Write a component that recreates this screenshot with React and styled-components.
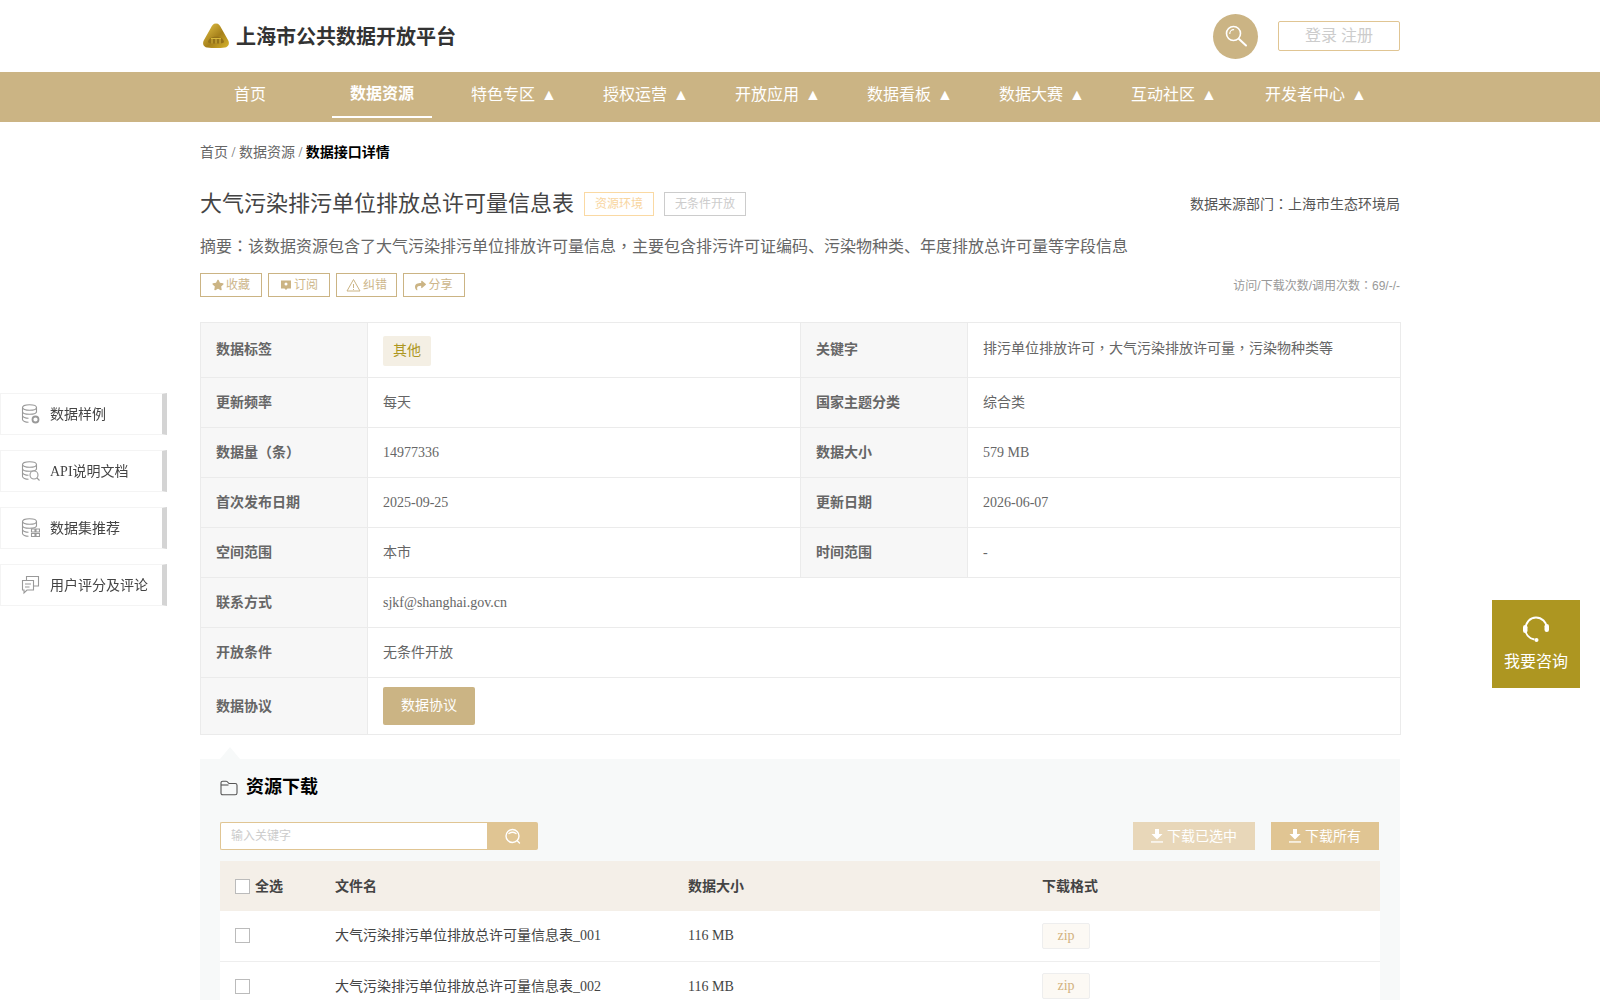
import React from 'react';
import styled, { createGlobalStyle } from 'styled-components';
import { FaStar, FaShare } from 'react-icons/fa';

const GlobalStyle = createGlobalStyle`
  html, body {
    margin: 0;
    padding: 0;
    background: #fff;
    overflow: hidden;
  }
  body {
    font-family: "Liberation Serif", "Noto Sans CJK SC", serif;
    font-size: 14px;
    line-height: 1.5;
    color: #666;
  }
  * { box-sizing: border-box; }
`;

const Page = styled.div`
  height: 1000px;
  overflow: hidden;
`;

const Wrap = styled.div`
  width: 1200px;
  margin: 0 auto;
`;

const HeaderBar = styled(Wrap)`
  height: 72px;
  display: flex;
  align-items: center;
  justify-content: space-between;
`;

const Brand = styled.div`
  display: flex;
  align-items: center;
  gap: 6px;
  padding-left: 2px;
  font-size: 20px;
  line-height: 28px;
  font-weight: 700;
  color: #333;
  font-family: "Noto Sans CJK SC", sans-serif;
`;

const HeaderRight = styled.div`
  display: flex;
  align-items: center;
  gap: 20px;
`;

const SearchCircle = styled.div`
  width: 45px;
  height: 45px;
  border-radius: 50%;
  background: #cbb484;
  display: flex;
  align-items: center;
  justify-content: center;
`;

const LoginBox = styled.div`
  width: 122px;
  height: 30px;
  border: 1px solid #e0c593;
  border-radius: 2px;
  color: #ccc;
  font-size: 16px;
  line-height: 28px;
  text-align: center;
`;

const NavBar = styled.div`
  height: 50px;
  background: #cbb484;
`;

const NavInner = styled(Wrap)`
  display: flex;
  gap: 32px;
`;

const NavItem = styled.div`
  min-width: ${(p) => (p.$wide ? '120px' : '100px')};
  height: 46px;
  line-height: ${(p) => (p.$active ? '44px' : '46px')};
  text-align: center;
  color: #fff;
  font-size: 16px;
  white-space: nowrap;
  font-weight: ${(p) => (p.$active ? 700 : 400)};
  border-bottom: ${(p) => (p.$active ? '2px solid #fff' : 'none')};
`;

const Caret = styled.span`
  margin-left: 6px;
`;

const Crumbs = styled.div`
  margin-top: 21px;
  height: 20px;
  line-height: 20px;
  color: #666;
  font-size: 14px;
`;

const CrumbNow = styled.b`
  color: #000;
`;

const TitleRow = styled.div`
  margin-top: 25px;
  height: 32px;
  display: flex;
  align-items: center;
`;

const Title = styled.h1`
  margin: 0 10px 0 0;
  font-size: 22px;
  line-height: 32px;
  font-weight: 400;
  color: #444;
`;

const Tag = styled.span`
  height: 24px;
  line-height: 22px;
  padding: 0 10px;
  margin-right: 10px;
  font-size: 12px;
  border: 1px solid ${(p) => (p.$muted ? '#ccc' : '#fad9a3')};
  color: ${(p) => (p.$muted ? '#ccc' : '#f8d59e')};
`;

const Source = styled.div`
  margin-left: auto;
  font-size: 14px;
  color: #555;
`;

const Punct = styled.span`
  font-family: "Noto Sans CJK TC", sans-serif;
`;

const Summary = styled.p`
  margin: 12px 0 0;
  height: 26px;
  line-height: 26px;
  font-size: 16px;
  color: #666;
`;

const ActionRow = styled.div`
  margin-top: 15px;
  height: 24px;
  display: flex;
  align-items: center;
  gap: 6px;
`;

const ActionBtn = styled.div`
  width: ${(p) => p.$w || 62}px;
  height: 24px;
  border: 1px solid #cbb484;
  color: #cdb68a;
  font-size: 12px;
  display: flex;
  align-items: center;
  justify-content: center;
  gap: 2px;
`;

const Visits = styled.div`
  margin-left: auto;
  font-family: "Liberation Sans", "Noto Sans CJK SC", sans-serif;
  font-size: 12px;
  color: #999;
`;

const InfoTable = styled.table`
  margin-top: 25px;
  width: 1200px;
  table-layout: fixed;
  border-collapse: collapse;
  border: 1px solid #ebebeb;
`;

const InfoRow = styled.tr`
  height: ${(p) => p.$h || 50}px;
`;

const Th = styled.th`
  width: 167px;
  padding: 0 15px;
  background: #f7f7f7;
  border: 1px solid #ebebeb;
  text-align: left;
  font-size: 14px;
  font-weight: 700;
  color: #666;
  vertical-align: ${(p) => (p.$top ? 'top' : 'middle')};
  padding-top: ${(p) => (p.$top ? '16px' : '0')};
`;

const Td = styled.td`
  padding: 0 15px;
  border: 1px solid #ebebeb;
  font-size: 14px;
  color: #666;
  vertical-align: ${(p) => (p.$top ? 'top' : 'middle')};
  padding-top: ${(p) => (p.$top ? '14px' : '0')};
`;

const LabelChip = styled.span`
  display: block;
  width: 48px;
  height: 30px;
  line-height: 30px;
  margin-top: 1px;
  text-align: center;
  border-radius: 2px;
  background: #f4efe4;
  color: #ad9621;
`;

const AgreementBtn = styled.div`
  width: 92px;
  height: 38px;
  line-height: 38px;
  text-align: center;
  border-radius: 2px;
  background: #cbb484;
  color: #fff;
`;

const Panel = styled.section`
  position: relative;
  margin-top: 24px;
  height: 400px;
  padding: 0 20px;
  background: #f7f9f9;

  &::before {
    content: '';
    position: absolute;
    left: 20px;
    top: -12px;
    border-left: 10px solid transparent;
    border-right: 10px solid transparent;
    border-bottom: 12px solid #f7f9f9;
  }
`;

const PanelTitle = styled.h2`
  margin: 0;
  height: 63px;
  padding-bottom: 6px;
  display: flex;
  align-items: center;
  gap: 8px;
  font-size: 18px;
  font-weight: 700;
  color: #000;
`;

const Toolbar = styled.div`
  height: 28px;
  display: flex;
  align-items: stretch;
`;

const KeywordInput = styled.input`
  width: 267px;
  height: 28px;
  padding: 0 10px;
  border: 1px solid #e0c593;
  border-right: none;
  border-radius: 2px 0 0 2px;
  outline: none;
  background: #fff;
  font-family: inherit;
  font-size: 12px;

  &::placeholder {
    color: #ccc;
  }
`;

const KeywordBtn = styled.div`
  width: 51px;
  background: #e0c593;
  border-radius: 0 2px 2px 0;
  display: flex;
  align-items: center;
  justify-content: center;
`;

const DownloadBtn = styled.div`
  width: ${(p) => p.$w}px;
  margin-left: ${(p) => p.$ml || 0};
  background: ${(p) => (p.$faded ? '#e8d7b9' : '#e0c593')};
  color: #fff;
  font-size: 14px;
  display: flex;
  align-items: center;
  justify-content: center;
  gap: 4px;
`;

const FileTable = styled.table`
  margin-top: 11px;
  width: 1160px;
  table-layout: fixed;
  border-collapse: collapse;
`;

const FileHead = styled.tr`
  height: 50px;
  background: #f4efe8;
`;

const FileRow = styled.tr`
  height: 50px;
  background: #fff;
  border-bottom: 1px solid #eee;
`;

const FileTh = styled.th`
  width: ${(p) => p.$w}px;
  padding: 0 0 0 ${(p) => p.$pl || 0}px;
  text-align: left;
  font-size: 14px;
  font-weight: 700;
  color: #444;
`;

const FileTd = styled.td`
  padding: 0 0 0 ${(p) => p.$pl || 0}px;
  font-size: 14px;
  color: #444;
`;

const CheckLabel = styled.span`
  display: flex;
  align-items: center;
  gap: 5px;
`;

const Check = styled.span`
  display: block;
  width: 15px;
  height: 15px;
  border: 1px solid #bbb;
  background: #fff;
`;

const Zip = styled.span`
  display: block;
  width: 48px;
  height: 26px;
  line-height: 24px;
  text-align: center;
  border: 1px solid #eee;
  border-radius: 2px;
  background: #fcf9f4;
  color: #d2b27e;
`;

const SideNav = styled.nav`
  position: fixed;
  left: 0;
  top: 393px;
  width: 167px;
  display: flex;
  flex-direction: column;
  gap: 15px;
`;

const SideItem = styled.div`
  height: 42px;
  display: flex;
  align-items: center;
  gap: 10px;
  padding-left: 20px;
  background: #fff;
  border: 1px solid #f4f4f4;
  border-right: 5px solid #d4d4d4;
  color: #444;
  font-size: 14px;
  white-space: nowrap;
`;

const Consult = styled.div`
  position: fixed;
  left: 1492px;
  top: 600px;
  width: 88px;
  height: 88px;
  background: #ad9621;
  color: #fff;
  font-size: 16px;
  display: flex;
  flex-direction: column;
  align-items: center;
  justify-content: center;
  gap: 7px;
`;

const Logo = () => (
  <svg width="28" height="28" viewBox="0 0 28 28">
    <defs>
      <linearGradient id="gold" x1="0" y1="0" x2="1" y2="1">
        <stop offset="0" stopColor="#e8c74a" />
        <stop offset="0.55" stopColor="#a5801a" />
        <stop offset="1" stopColor="#d8b52c" />
      </linearGradient>
    </defs>
    <path d="M14 1.500c3 0 4 2 5.500 5l6.500 11.500c2 3.600 .5 7-3 7.500-6 .8-12 .8-18 0-3.500-.5-5-3.900-3-7.500L8.500 6.500C10 3.500 11 1.500 14 1.500z" fill="url(#gold)" />
    <path d="M6 20c1-7 15-7 16 0 0 2-16 2-16 0z" fill="#94721a" />
    <path d="M9 16.500h10M10 16.500v5M14 16.500v5M18 16.500v5" stroke="#d9b93c" strokeWidth="1" fill="none" />
  </svg>
);

const SearchGlass = ({ size = 24 }) => (
  <svg width={size} height={size} viewBox="0 0 24 24" fill="none" stroke="#fff" strokeWidth="1.600" strokeLinecap="round">
    <circle cx="9.500" cy="9.500" r="7" />
    <path d="M5.800 9.500a3.800 3.800 0 0 1 3.800-3.800" strokeWidth="1.200" />
    <path d="M15 15l7 6.500" strokeWidth="2" />
  </svg>
);

const SmallSearch = () => (
  <svg width="18" height="18" viewBox="0 0 18 18" fill="none" stroke="#fff" strokeWidth="1.400" strokeLinecap="round">
    <circle cx="8.500" cy="9" r="6.500" />
    <path d="M5 6.500c2-1.500 5-1.500 7 0" />
    <path d="M13.500 14l2 2" />
  </svg>
);

const BookIcon = () => (
  <svg width="12" height="12" viewBox="0 0 12 12" fill="#cbb484">
    <path d="M1 1.500h10v8H7.500L6 11 4.500 9.500H1z" />
    <circle cx="6" cy="5" r="1.500" fill="#fff" />
  </svg>
);

const WarnIcon = () => (
  <svg width="15" height="14" viewBox="0 0 15 14" fill="none" stroke="#cbb484" strokeWidth="1">
    <path d="M7.500 1.500L14 13H1z" />
    <path d="M7.500 6v4M7.500 11v1" />
  </svg>
);

const DownIcon = () => (
  <svg width="12" height="14" viewBox="0 0 12 14" fill="#fff">
    <path d="M4 0h4v5h3.500L6 10.500.5 5H4z" />
    <path d="M0 12.300h12v1.300H0z" />
  </svg>
);

const FolderIcon = () => (
  <svg width="18" height="16" viewBox="0 0 18 16" fill="none" stroke="#555" strokeWidth="1.100">
    <path d="M1 12.500V3a1.800 1.800 0 0 1 1.800-1.800h3.400c1 0 1.400.6 2 1.600.3.500.6.700 1.200.7h5.800A1.800 1.800 0 0 1 17 5.300v7.700a1.800 1.800 0 0 1-1.800 1.800H2.800A1.800 1.800 0 0 1 1 12.500z" />
    <path d="M1 5h7.500" />
  </svg>
);

const Cylinder = ({ children }) => (
  <svg width="19" height="20" viewBox="0 0 19 20" fill="none" stroke="#999" strokeWidth="1.100">
    <ellipse cx="8.500" cy="3.500" rx="7" ry="2.800" fill="#fff" />
    <path d="M1.500 3.500v12c0 1.500 3 2.800 6 2.800M15.500 3.500v5M1.500 7.500c0 1.500 3 2.800 7 2.800s7-1.300 7-2.800M1.500 11.500c0 1.500 3 2.800 6 2.800" />
    {children}
  </svg>
);

const ChatIcon = () => (
  <svg width="19" height="20" viewBox="0 0 19 20" fill="none" stroke="#999" strokeWidth="1.100">
    <path d="M1.500 5.500h11v9.500H6l-3 3v-3H1.500z" />
    <path d="M5.500 5.500V1.500h12v9.500h-5M4 9h6M4 12h4.500" />
  </svg>
);

const Headset = () => (
  <svg width="28" height="28" viewBox="0 0 28 28" fill="none" stroke="#fff" strokeWidth="2">
    <path d="M3.500 14C3.500 7.500 8 2.500 14 2.500S24.500 7.500 24.500 12" />
    <path d="M3.500 14c0 5 3 9.500 9 10.500" />
    <rect x="1" y="10" width="4.500" height="8" rx="2.200" fill="#fff" stroke="none" />
    <rect x="22.500" y="9" width="4.500" height="8" rx="2.200" fill="#fff" stroke="none" />
    <circle cx="14.500" cy="25" r="2" fill="#fff" stroke="none" />
  </svg>
);

const navItems = [
  { label: '首页' },
  { label: '数据资源', active: true },
  { label: '特色专区', menu: true },
  { label: '授权运营', menu: true },
  { label: '开放应用', menu: true },
  { label: '数据看板', menu: true },
  { label: '数据大赛', menu: true },
  { label: '互动社区', menu: true },
  { label: '开发者中心', menu: true, wide: true },
];

const App = () => (
  <Page>
    <GlobalStyle />
    <HeaderBar>
      <Brand>
        <Logo />
        上海市公共数据开放平台
      </Brand>
      <HeaderRight>
        <SearchCircle><SearchGlass /></SearchCircle>
        <LoginBox>登录 注册</LoginBox>
      </HeaderRight>
    </HeaderBar>

    <NavBar>
      <NavInner>
        {navItems.map((item) => (
          <NavItem key={item.label} $active={item.active} $wide={item.wide}>
            {item.label}
            {item.menu && <Caret>▲</Caret>}
          </NavItem>
        ))}
      </NavInner>
    </NavBar>

    <Wrap>
      <Crumbs>首页 / 数据资源 / <CrumbNow>数据接口详情</CrumbNow></Crumbs>

      <TitleRow>
        <Title>大气污染排污单位排放总许可量信息表</Title>
        <Tag>资源环境</Tag>
        <Tag $muted>无条件开放</Tag>
        <Source>数据来源部门<Punct>：</Punct>上海市生态环境局</Source>
      </TitleRow>

      <Summary>摘要<Punct>：</Punct>该数据资源包含了大气污染排污单位排放许可量信息<Punct>，</Punct>主要包含排污许可证编码、污染物种类、年度排放总许可量等字段信息</Summary>

      <ActionRow>
        <ActionBtn><FaStar size={12} color="#cbb484" />收藏</ActionBtn>
        <ActionBtn><BookIcon />订阅</ActionBtn>
        <ActionBtn $w={61}><WarnIcon />纠错</ActionBtn>
        <ActionBtn><FaShare size={11} color="#cbb484" />分享</ActionBtn>
        <Visits>访问/下载次数/调用次数<Punct>：</Punct>69/-/-</Visits>
      </ActionRow>

      <InfoTable>
        <colgroup>
          <col width="167" />
          <col width="433" />
          <col width="167" />
          <col width="433" />
        </colgroup>
        <tbody>
          <InfoRow $h={55}>
            <Th $top>数据标签</Th>
            <Td><LabelChip>其他</LabelChip></Td>
            <Th $top>关键字</Th>
            <Td $top>排污单位排放许可<Punct>，</Punct>大气污染排放许可量<Punct>，</Punct>污染物种类等</Td>
          </InfoRow>
          <InfoRow>
            <Th>更新频率</Th><Td>每天</Td>
            <Th>国家主题分类</Th><Td>综合类</Td>
          </InfoRow>
          <InfoRow>
            <Th>数据量（条）</Th><Td>14977336</Td>
            <Th>数据大小</Th><Td>579 MB</Td>
          </InfoRow>
          <InfoRow>
            <Th>首次发布日期</Th><Td>2025-09-25</Td>
            <Th>更新日期</Th><Td>2026-06-07</Td>
          </InfoRow>
          <InfoRow>
            <Th>空间范围</Th><Td>本市</Td>
            <Th>时间范围</Th><Td>-</Td>
          </InfoRow>
          <InfoRow>
            <Th>联系方式</Th><Td colSpan={3}>sjkf@shanghai.gov.cn</Td>
          </InfoRow>
          <InfoRow>
            <Th>开放条件</Th><Td colSpan={3}>无条件开放</Td>
          </InfoRow>
          <InfoRow $h={57}>
            <Th>数据协议</Th><Td colSpan={3}><AgreementBtn>数据协议</AgreementBtn></Td>
          </InfoRow>
        </tbody>
      </InfoTable>

      <Panel>
        <PanelTitle><FolderIcon />资源下载</PanelTitle>
        <Toolbar>
          <KeywordInput placeholder="输入关键字" />
          <KeywordBtn><SmallSearch /></KeywordBtn>
          <DownloadBtn $faded $w={122} $ml="595px"><DownIcon />下载已选中</DownloadBtn>
          <DownloadBtn $w={108} $ml="16px"><DownIcon />下载所有</DownloadBtn>
        </Toolbar>
        <FileTable>
          <tbody>
            <FileHead>
              <FileTh $w={115} $pl={15}><CheckLabel><Check />全选</CheckLabel></FileTh>
              <FileTh $w={353}>文件名</FileTh>
              <FileTh $w={354}>数据大小</FileTh>
              <FileTh>下载格式</FileTh>
            </FileHead>
            {['001', '002'].map((n) => (
              <FileRow key={n}>
                <FileTd $pl={15}><Check /></FileTd>
                <FileTd>大气污染排污单位排放总许可量信息表_{n}</FileTd>
                <FileTd>116 MB</FileTd>
                <FileTd><Zip>zip</Zip></FileTd>
              </FileRow>
            ))}
          </tbody>
        </FileTable>
      </Panel>
    </Wrap>

    <SideNav>
      <SideItem>
        <Cylinder><circle cx="14.500" cy="15.500" r="3" fill="#fff" strokeWidth="1.800" /></Cylinder>
        数据样例
      </SideItem>
      <SideItem>
        <Cylinder><circle cx="13" cy="14" r="4" fill="#fff" /><path d="M16 17l2.500 2.500" /></Cylinder>
        API说明文档
      </SideItem>
      <SideItem>
        <Cylinder><path d="M10.500 11h3.500v3h-3.500zM15 11h3.500v3H15zM10.500 15.500h3.500v3h-3.500zM15 15.500h3.500v3H15z" fill="#fff" /></Cylinder>
        数据集推荐
      </SideItem>
      <SideItem>
        <ChatIcon />
        用户评分及评论
      </SideItem>
    </SideNav>

    <Consult>
      <Headset />
      我要咨询
    </Consult>
  </Page>
);

export default App;
